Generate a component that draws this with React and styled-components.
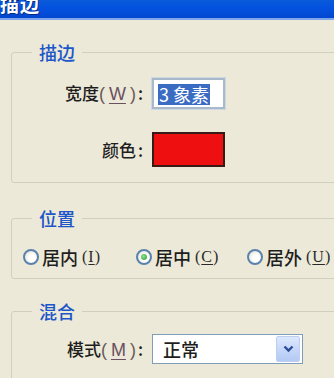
import React from 'react';
import styled, { createGlobalStyle } from 'styled-components';

const GlobalStyle = createGlobalStyle`
    html, body {
        margin: 0;
        padding: 0;
        width: 334px;
        height: 378px;
        overflow: hidden;
        background: #ece9d8;
    }
    body {
        font-family: "Noto Sans CJK SC", "Liberation Sans", sans-serif;
    }
`;

const Window = styled.div`
    width: 334px;
    height: 378px;
    overflow: hidden;
    display: flex;
    flex-direction: column;
    background: #ece9d8;
`;

const TitleBar = styled.div`
    height: 18px;
    flex-shrink: 0;
    overflow: hidden;
    background: linear-gradient(180deg, #0a5ad8 0%, #0453e0 40%, #0146d0 100%);
    border-bottom: 2px solid #7fa6e8;
`;

const TitleText = styled.div`
    margin-top: -7px;
    font-size: 19px;
    line-height: 22px;
    font-weight: 700;
    color: #ffffff;
    text-shadow: 1px 1px 0 #0a2a80;
    letter-spacing: 1px;
`;

const Body = styled.div`
    padding: 22px 0 0 11px;
    display: flex;
    flex-direction: column;
`;

const Group = styled.fieldset`
    box-sizing: border-box;
    width: 400px;
    height: ${p => p.$h}px;
    margin: ${p => p.$mt || 0}px 0 0 0;
    padding: ${p => p.$pt}px 0 0 0;
    border: 1px solid #d0d0bf;
    border-radius: 3px;
    min-width: 0;
`;

const Legend = styled.legend`
    margin-left: 20px;
    padding: 0 7px;
    font-size: 18px;
    line-height: 20px;
    font-weight: 500;
    color: #1d56c8;
`;

const FormGrid = styled.div`
    display: grid;
    grid-template-columns: 131px auto;
    column-gap: 9px;
    row-gap: ${p => p.$gap || 0}px;
    align-items: center;
    justify-items: start;
`;

const Label = styled.div`
    justify-self: end;
    font-size: 17px;
    line-height: 22px;
    font-weight: 500;
    color: #1e1e1e;
    white-space: nowrap;
`;

const Paren = styled.span`
    font-family: "Liberation Sans", sans-serif;
    font-weight: 400;
    font-size: 18px;
    color: #6a5a58;
`;

const Key = styled.span`
    display: inline-block;
    padding: 0 4px;
    font-family: "Liberation Sans", sans-serif;
    font-weight: 400;
    font-size: 18px;
    color: #6a5060;
    text-decoration: underline;
    text-underline-offset: 3px;
`;

const Colon = styled.span`
    margin-left: 2px;
`;

const TextInput = styled.div`
    box-sizing: border-box;
    width: 73px;
    height: 31px;
    border: 2px solid #a9b9cc;
    outline: 1px solid #ced8e4;
    background: #ffffff;
    padding: 3px 0 0 4px;
`;

const Selected = styled.span`
    display: inline-block;
    background: #3a6cc4;
    color: #ffffff;
    font-size: 18px;
    line-height: 21px;
    padding: 0 1px;
    white-space: nowrap;
`;

const Swatch = styled.div`
    box-sizing: border-box;
    width: 73px;
    height: 35px;
    border: 2px solid #3a1a14;
    background: #ee1010;
`;

const RadioRow = styled.div`
    display: flex;
    align-items: center;
    padding-left: 11px;
`;

const RadioItem = styled.label`
    display: flex;
    align-items: center;
    width: ${p => p.$w}px;
    flex-shrink: 0;
    font-size: 18px;
    line-height: 22px;
    font-weight: 500;
    color: #1e1e1e;
    white-space: nowrap;
`;

const RadioCircle = styled.span`
    box-sizing: border-box;
    width: 16px;
    height: 16px;
    border-radius: 50%;
    border: 2px solid #5a82ac;
    background: radial-gradient(circle at 60% 60%, #ffffff 30%, #dcdcd2 100%);
    margin-right: 3px;
    display: flex;
    align-items: center;
    justify-content: center;
    &::after {
        content: '';
        display: ${p => (p.$on ? 'block' : 'none')};
        width: 6px;
        height: 6px;
        border-radius: 50%;
        background: radial-gradient(circle at 40% 40%, #8ee28e, #2a9a2a);
    }
`;

const SmallKey = styled.span`
    font-size: 16px;
    margin-left: 4px;
    font-family: "Liberation Serif", serif;
    font-weight: 400;
    letter-spacing: 1px;
    color: #2a2a2a;
    & u {
        text-underline-offset: 2px;
    }
`;

const Select = styled.div`
    box-sizing: border-box;
    width: 151px;
    height: 30px;
    border: 1px solid #7f9db9;
    background: #ffffff;
    display: flex;
    align-items: center;
    justify-content: space-between;
    padding: 2px;
`;

const SelectValue = styled.span`
    font-size: 18px;
    line-height: 22px;
    font-weight: 500;
    color: #1e1e1e;
    padding-left: 8px;
`;

const ArrowButton = styled.div`
    width: 22px;
    height: 24px;
    border-radius: 2px;
    background: linear-gradient(180deg, #dde8fd 0%, #c2d4f8 60%, #b4c9f3 100%);
    border: 1px solid #bccef4;
    display: flex;
    align-items: center;
    justify-content: center;
`;

const Radio = ({ label, hotkey, on, w }) => (
    <RadioItem $w={w}>
        <RadioCircle $on={on} />
        {label}
        <SmallKey>
            (<u>{hotkey}</u>)
        </SmallKey>
    </RadioItem>
);

const App = () => (
    <>
        <GlobalStyle />
        <Window>
            <TitleBar>
                <TitleText>描边</TitleText>
            </TitleBar>
            <Body>
                <Group $h={141} $pt={16}>
                    <Legend>描边</Legend>
                    <FormGrid $gap={23}>
                        <Label>
                            宽度<Paren>(</Paren>
                            <Key>W</Key>
                            <Paren>)</Paren>
                            <Colon>:</Colon>
                        </Label>
                        <TextInput>
                            <Selected>3 象素</Selected>
                        </TextInput>
                        <Label>
                            颜色<Colon>:</Colon>
                        </Label>
                        <Swatch />
                    </FormGrid>
                </Group>

                <Group $h={71} $mt={25} $pt={18}>
                    <Legend>位置</Legend>
                    <RadioRow>
                        <Radio label="居内" hotkey="I" w={113} />
                        <Radio label="居中" hotkey="C" on w={111} />
                        <Radio label="居外" hotkey="U" w={110} />
                    </RadioRow>
                </Group>

                <Group $h={120} $mt={22} $pt={13}>
                    <Legend>混合</Legend>
                    <FormGrid>
                        <Label>
                            模式<Paren>(</Paren>
                            <Key>M</Key>
                            <Paren>)</Paren>
                            <Colon>:</Colon>
                        </Label>
                        <Select>
                            <SelectValue>正常</SelectValue>
                            <ArrowButton>
                                <svg width="11" height="8" viewBox="0 0 11 8">
                                    <path
                                        d="M1.5 1.5 L5.5 5.5 L9.5 1.5"
                                        fill="none"
                                        stroke="#2a4d9a"
                                        strokeWidth="2.4"
                                    />
                                </svg>
                            </ArrowButton>
                        </Select>
                    </FormGrid>
                </Group>
            </Body>
        </Window>
    </>
);

export default App;
